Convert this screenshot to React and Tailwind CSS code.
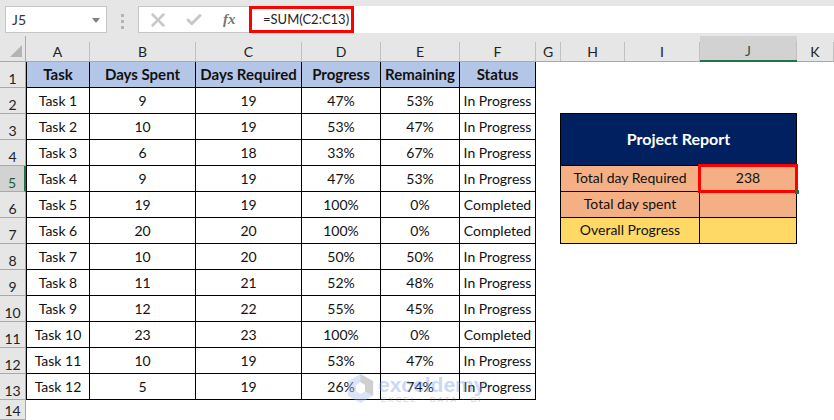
import React from 'react'
import { X, Check } from 'lucide-react'

const columns = ['A', 'B', 'C', 'D', 'E', 'F', 'G', 'H', 'I', 'J', 'K']
const rowNumbers = [1, 2, 3, 4, 5, 6, 7, 8, 9, 10, 11, 12, 13]
const tasks = [
    ['Task 1', 9, 19, '47%', '53%', 'In Progress'],
    ['Task 2', 10, 19, '53%', '47%', 'In Progress'],
    ['Task 3', 6, 18, '33%', '67%', 'In Progress'],
    ['Task 4', 9, 19, '47%', '53%', 'In Progress'],
    ['Task 5', 19, 19, '100%', '0%', 'Completed'],
    ['Task 6', 20, 20, '100%', '0%', 'Completed'],
    ['Task 7', 10, 20, '50%', '50%', 'In Progress'],
    ['Task 8', 11, 21, '52%', '48%', 'In Progress'],
    ['Task 9', 12, 22, '55%', '45%', 'In Progress'],
    ['Task 10', 23, 23, '100%', '0%', 'Completed'],
    ['Task 11', 10, 19, '53%', '47%', 'In Progress'],
    ['Task 12', 5, 19, '26%', '74%', 'In Progress'],
]
const headers = ['Task', 'Days Spent', 'Days Required', 'Progress', 'Remaining', 'Status']

const FormulaBar = () => (
    <div className="flex h-9 items-start bg-[#e6e6e6] pt-[6px]">
        <div className="ml-[5px] flex h-[27px] w-[102px] items-center justify-between border border-[#c6c6c6] bg-white pl-[6px] pr-[6px] text-[#333]">
            <span>J5</span>
            <span className="mt-[1px] h-0 w-0 border-x-[4px] border-t-[5px] border-x-transparent border-t-[#808080]"></span>
        </div>
        <div className="mx-[14px] mt-[8px] flex flex-col gap-[3px]">
            <span className="h-[3px] w-[3px] bg-[#b4b4b4]"></span>
            <span className="h-[3px] w-[3px] bg-[#b4b4b4]"></span>
            <span className="h-[3px] w-[3px] bg-[#b4b4b4]"></span>
        </div>
        <div className="flex h-[27px] w-[111px] items-center border border-r-0 border-[#c6c6c6] bg-white pl-[8px]">
            <X size={22} strokeWidth={2.7} className="text-[#c8c8c8]" />
            <Check size={18} strokeWidth={4} className="ml-[16px] text-[#c8c8c8]" />
            <span className="ml-[20px] font-['Liberation_Serif',serif] text-[15px] font-bold italic text-[#777]">fx</span>
        </div>
        <div className="flex h-[27px] flex-1 items-center bg-white">
            <div className="flex h-[27px] w-[105px] items-center whitespace-nowrap border-[3px] border-[#ff0000] pl-[11px] text-[13px] text-[#222]">=SUM(C2:C13)</div>
        </div>
    </div>
)

const Watermark = () => (
    <div className="pointer-events-none absolute bottom-[16px] left-[347px] flex items-center gap-[4px] opacity-40">
        <svg width="27" height="31" viewBox="0 0 30 32">
            <polygon points="15,0 29,8 29,24 15,32 1,24 1,8" fill="#a9bdf0" />
            <polygon points="15,0 29,8 29,24 20,19 20,12 15,9" fill="#8a8a8a" />
            <polygon points="15,9 20,12 20,19 15,22 10,19 10,12" fill="#ffffff" />
        </svg>
        <div className="flex flex-col items-center font-['Liberation_Sans',sans-serif] leading-none">
            <span className="text-[21px] font-bold text-[#7f9ff0]">exceldemy</span>
            <span className="mt-[1px] text-[8px] tracking-[2px] text-[#8a8a8a]">EXCEL · DATA · BI</span>
        </div>
    </div>
)

const ReportTable = () => (
    <div className="col-start-9 col-end-12 row-start-4 row-end-9 -ml-px -mt-px grid grid-cols-[139px_97px] grid-rows-[52px_26px_26px_26px] border-l border-t border-black">
        <div className="col-span-2 flex items-center justify-center border-b border-r border-black bg-[#002060] pb-[2px] text-[16px] font-bold text-white">Project Report</div>
        <div className="flex items-center justify-center border-b border-r border-black bg-[#f4b084] pb-[2px]">Total day Required</div>
        <div className="relative flex items-center justify-center border-b border-r border-black bg-[#f4b084] pb-[2px]">
            238
            <span className="absolute -bottom-[2px] -left-[2px] -right-[2px] -top-[2px] border-[3px] border-[#ff0000]"></span>
            <span className="absolute -bottom-[3px] -right-[3px] h-[4px] w-[4px] bg-[#217346]"></span>
        </div>
        <div className="flex items-center justify-center border-b border-r border-black bg-[#f4b084] pb-[2px]">Total day spent</div>
        <div className="border-b border-r border-black bg-[#f4b084]"></div>
        <div className="flex items-center justify-center border-b border-r border-black bg-[#ffd966] pb-[2px]">Overall Progress</div>
        <div className="border-b border-r border-black bg-[#ffd966]"></div>
    </div>
)

export default function App() {
    return (
        <div className="relative h-[420px] w-[834px] overflow-hidden bg-white font-['Lato',sans-serif] text-[14px] text-[#111]">
            <FormulaBar />
            <div className="grid grid-cols-[26px_64px_106px_106px_79px_79px_76px_25px_64px_75px_97px_37px] grid-rows-[26px_repeat(13,26px)_20px]">
                {/* column letters */}
                <div className="relative border-b border-r border-[#a9a9a9] bg-[#e6e6e6]">
                    <span className="absolute bottom-[4px] right-[3px] h-0 w-0 border-b-[12px] border-l-[12px] border-b-[#b4b4b4] border-l-transparent"></span>
                </div>
                {columns.map((c) => (
                    <div
                        key={c}
                        className={c === 'J'
                            ? 'flex items-end justify-center border-b-2 border-[#217346] bg-[#d2d2d2] pb-[1px] text-[#1f5c3c]'
                            : 'flex items-end justify-center border-b border-[#a9a9a9] bg-[#e6e6e6] pb-[1px] text-[#222]'}
                    >
                        <span className="-mb-[1px] flex h-[19px] w-full items-center justify-center border-r border-[#c0c0c0]">{c}</span>
                    </div>
                ))}

                {/* row numbers */}
                {rowNumbers.concat(14).map((n) => (
                    <div
                        key={n}
                        style={{ gridRowStart: n + 1, gridColumnStart: 1 }}
                        className={n === 5
                            ? 'flex items-end justify-center border-b border-r-2 border-b-[#a9a9a9] border-r-[#217346] bg-[#d2d2d2] leading-[17px] text-[#1f5c3c]'
                            : 'flex items-end justify-center border-b border-r border-[#a9a9a9] bg-[#e6e6e6] leading-[17px] text-[#222]'}
                    >
                        {n}
                    </div>
                ))}

                {/* task table */}
                {headers.map((h, i) => (
                    <div
                        key={h}
                        style={{ gridRowStart: 2, gridColumnStart: i + 2 }}
                        className={i === 0
                            ? 'flex items-center justify-center whitespace-nowrap border-b border-l border-r border-black bg-[#b4c6e7] text-[15px] font-bold'
                            : 'flex items-center justify-center whitespace-nowrap border-b border-r border-black bg-[#b4c6e7] text-[15px] font-bold'}
                    >
                        {h}
                    </div>
                ))}
                {tasks.map((row, r) =>
                    row.map((val, i) => (
                        <div
                            key={r + '-' + i}
                            style={{ gridRowStart: r + 3, gridColumnStart: i + 2 }}
                            className={i === 0
                                ? 'flex items-center justify-center whitespace-nowrap border-b border-l border-r border-black'
                                : 'flex items-center justify-center whitespace-nowrap border-b border-r border-black'}
                        >
                            {val}
                        </div>
                    ))
                )}

                <ReportTable />
            </div>
            <Watermark />
        </div>
    )
}
